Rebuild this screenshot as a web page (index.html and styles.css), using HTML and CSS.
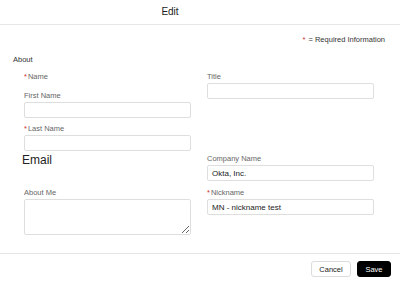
FILE: index.html
```html
<!DOCTYPE html>
<html lang="en">
<head>
  <meta charset="UTF-8">
  <title>Edit</title>
  <link rel="stylesheet" href="styles.css">
</head>
<body>

  <div class="header">Edit</div>

  <div class="required-note"><span class="req">*</span> = Required Information</div>

  <div class="section-title">About</div>

  <form class="fields">
    <div class="field name-group">
      <div class="label"><span class="req">*</span>Name</div>
      <div class="label sub">First Name</div>
      <input type="text" class="input">
      <div class="label sub tight"><span class="req">*</span>Last Name</div>
      <input type="text" class="input">
    </div>
    <div class="field">
      <div class="label">Title</div>
      <input type="text" class="input">
    </div>

    <div class="email">Email</div>
    <div class="field company">
      <div class="label">Company Name</div>
      <input type="text" class="input" value="Okta, Inc.">
    </div>

    <div class="field row3">
      <div class="label">About Me</div>
      <textarea class="input area"></textarea>
    </div>
    <div class="field row3">
      <div class="label"><span class="req">*</span>Nickname</div>
      <input type="text" class="input" value="MN - nickname test">
    </div>
  </form>

  <div class="footer">
    <button class="btn cancel">Cancel</button>
    <button class="btn save">Save</button>
  </div>

</body>
</html>
```

FILE: styles.css
```css
body {
  margin: 0;
  font-family: "Liberation Sans", Arial, sans-serif;
  color: #222;
  background: #fff;
}
.header {
  height: 24px;
  line-height: 24px;
  font-size: 10px;
  text-align: center;
  padding-right: 60px;
  border-bottom: 1px solid #e6e6e6;
  color: #222;
}
.required-note {
  margin-top: 10px;
  line-height: 10px;
  font-size: 7.5px;
  text-align: right;
  padding-right: 15px;
  color: #333;
}
.req {
  color: #d0312d;
  margin-right: 1px;
}
.section-title {
  margin-top: 10px;
  padding-left: 13px;
  line-height: 10px;
  font-size: 7.5px;
  color: #333;
}
.fields {
  display: grid;
  grid-template-columns: 167px 167px;
  column-gap: 16px;
  padding-left: 24px;
  margin-top: 7px;
}
.field {
  display: flex;
  flex-direction: column;
}
.label {
  font-size: 7.5px;
  line-height: 9px;
  color: #666;
  margin-bottom: 2px;
}
.label.sub {
  margin-top: 8px;
}
.label.tight {
  margin-top: 6px;
}
.input {
  box-sizing: border-box;
  height: 16px;
  width: 100%;
  margin: 0;
  padding: 0 4px;
  border: 1px solid #dedede;
  border-radius: 2px;
  font-family: "Liberation Sans", Arial, sans-serif;
  font-size: 8px;
  color: #222;
  background: #fff;
  outline: none;
}
.area {
  height: 36px;
  resize: vertical;
  padding: 3px 4px;
}
.email {
  margin-top: 2px;
  margin-left: -2px;
  font-size: 12px;
  line-height: 14px;
  color: #222;
}
.company {
  margin-top: 3px;
}
.row3 {
  margin-top: 7px;
}
.footer {
  margin-top: 18px;
  border-top: 1px solid #e6e6e6;
  display: flex;
  justify-content: flex-end;
  gap: 6px;
  padding: 7px 9px 0 0;
}
.btn {
  height: 16px;
  padding: 0;
  border-radius: 3px;
  font-family: "Liberation Sans", Arial, sans-serif;
  font-size: 7.5px;
  cursor: pointer;
}
.cancel {
  width: 40px;
  background: #fff;
  border: 1px solid #dcdcdc;
  color: #222;
}
.save {
  width: 34px;
  background: #000;
  border: 1px solid #000;
  color: #fff;
}
```
